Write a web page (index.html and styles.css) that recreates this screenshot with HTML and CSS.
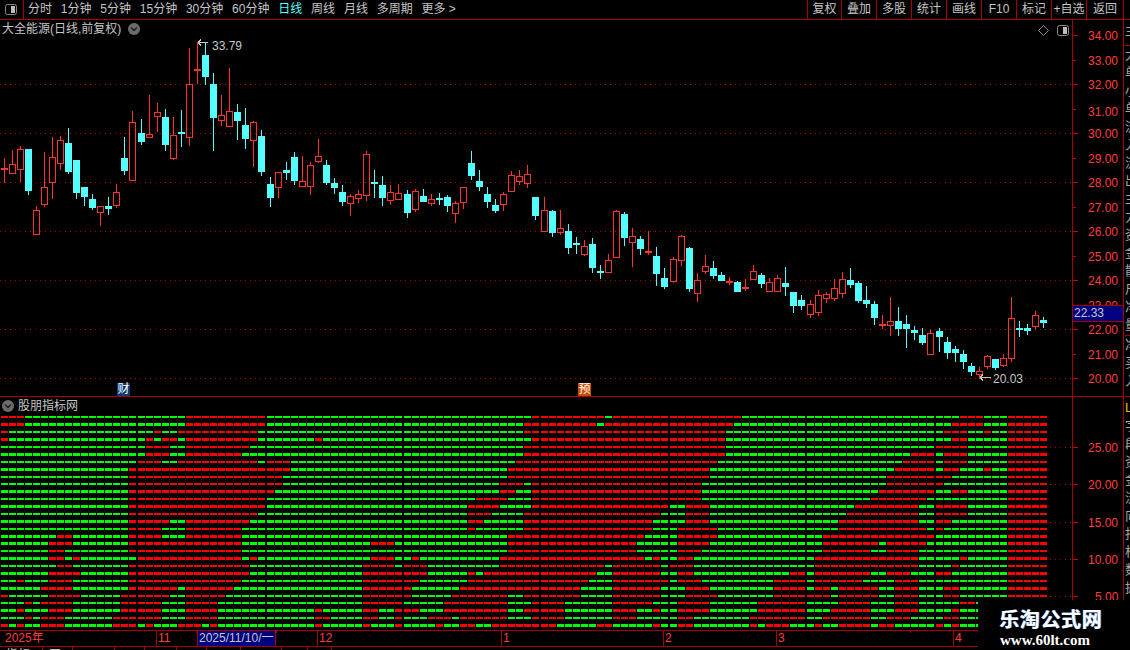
FILE: index.html
```html
<!DOCTYPE html>
<html lang="zh-CN">
<head>
<meta charset="utf-8">
<title>大全能源</title>
<link rel="stylesheet" href="styles.css">
</head>
<body>
<div class="app">
  <header class="toolbar">
    <div class="tool-left">
      <div class="tool-icon">
        <svg class="panel-icon" viewBox="0 0 12 11"><rect x="0.5" y="0.5" width="11" height="10" rx="2" class="panel-outline"/><rect x="6" y="2" width="4" height="7" class="panel-fill"/></svg>
      </div>
      <nav class="periods">
        <span>分时</span><span>1分钟</span><span>5分钟</span><span>15分钟</span><span>30分钟</span><span>60分钟</span><span class="active">日线</span><span>周线</span><span>月线</span><span>多周期</span><span>更多 &gt;</span>
      </nav>
    </div>
    <div class="actions">
      <span>复权</span><span>叠加</span><span>多股</span><span>统计</span><span>画线</span><span>F10</span><span>标记</span><span>+自选</span><span>返回</span>
    </div>
  </header>

  <main class="workspace">
    <section class="charts">
      <div class="pane pane-price">
        <svg id="price-chart" class="chart-svg" viewBox="0 20 1072 376"></svg>
        <div class="pane-title title-price">
          <span>大全能源(日线,前复权)</span>
          <svg class="chev" viewBox="0 0 12 12"><circle cx="6" cy="6" r="6" class="chev-disc"/><path d="M3 4.5 6 7.5 9 4.5" class="chev-mark"/></svg>
        </div>
        <div class="corner-tools">
          <svg class="diamond" viewBox="0 0 11 11"><path d="M5.5 0.5 10.5 5.5 5.5 10.5 0.5 5.5Z" class="panel-outline"/></svg>
          <svg class="panel-icon" viewBox="0 0 12 11"><rect x="0.5" y="0.5" width="11" height="10" rx="2" class="panel-outline"/><rect x="6" y="2" width="4" height="7" class="panel-fill"/></svg>
        </div>
        <span class="event event-cai">财</span>
        <span class="event event-yu">预</span>
      </div>
      <div class="pane pane-heat">
        <svg id="heat-chart" class="chart-svg" viewBox="0 397 1072 233"></svg>
        <div class="pane-title title-heat">
          <svg class="chev" viewBox="0 0 12 12"><circle cx="6" cy="6" r="6" class="chev-disc"/><path d="M3 4.5 6 7.5 9 4.5" class="chev-mark"/></svg>
          <span>股朋指标网</span>
        </div>
      </div>
    </section>

    <aside class="axis">
      <div class="axis-price">
        <svg class="axis-svg" viewBox="1073 20 50 376">
          <g class="ticks">
            <path d="M1073 35.500h5M1073 60.500h3M1073 84.500h5M1073 109.500h3M1073 133.500h5M1073 158.500h3M1073 182.500h5M1073 207.500h3M1073 231.500h5M1073 256.500h3M1073 280.500h5M1073 305.500h3M1073 329.500h5M1073 354.500h3M1073 378.500h5"/>
          </g>
          <g class="axis-labels">
            <text x="1088" y="40">34.00</text>
            <text x="1088" y="65">33.00</text>
            <text x="1088" y="89">32.00</text>
            <text x="1088" y="116">31.00</text>
            <text x="1088" y="138">30.00</text>
            <text x="1088" y="163">29.00</text>
            <text x="1088" y="187">28.00</text>
            <text x="1088" y="212">27.00</text>
            <text x="1088" y="236">26.00</text>
            <text x="1088" y="261">25.00</text>
            <text x="1088" y="285">24.00</text>
            <text x="1088" y="310">23.00</text>
            <text x="1088" y="334">22.00</text>
            <text x="1088" y="359">21.00</text>
            <text x="1088" y="383">20.00</text>
          </g>
        </svg>
        <div class="price-tag">22.33</div>
      </div>
      <div class="axis-heat">
        <svg class="axis-svg" viewBox="1073 397 50 233">
          <g class="ticks">
            <path d="M1073 447.500h5M1073 484.500h5M1073 522.500h5M1073 559.500h5M1073 596.500h5"/>
          </g>
          <g class="axis-labels">
            <text x="1088" y="452">25.00</text>
            <text x="1088" y="489">20.00</text>
            <text x="1088" y="527">15.00</text>
            <text x="1088" y="564">10.00</text>
            <text x="1095" y="601">5.00</text>
          </g>
        </svg>
      </div>
    </aside>

    <aside class="side">
      <div class="side-block side-a">主</div>
      <div class="side-block side-b">大单小单流入流出主力资金散户净量</div>
      <div class="side-block side-c">净买入</div>
      <div class="side-block side-d"><span class="side-gold">L</span>字段资金流向指标数据买入卖出净额占比</div>
    </aside>
  </main>

  <footer class="timeline">
    <div class="month first">2025年</div>
    <div class="month">11</div>
    <div class="month">12</div>
    <div class="month">1</div>
    <div class="month">2</div>
    <div class="month">3</div>
    <div class="month">4</div>
    <div class="date-cursor">2025/11/10/一</div>
    <i class="tick"></i>
  </footer>

  <div class="tabs">
    <span>指标</span><span>工</span><span></span><span></span><span></span><span></span><span></span><span></span><span></span><span></span>
  </div>

  <div class="watermark">
    <div class="wm-cn">乐淘公式网</div>
    <div class="wm-en">www.60lt.com</div>
  </div>
</div>
<script src="chart.js"></script>
</body>
</html>
```

FILE: styles.css
```css
* { box-sizing: border-box; }

html, body {
  margin: 0;
  background: #000;
}

body {
  font-family: "Liberation Sans", "Noto Sans CJK SC", sans-serif;
  font-size: 12px;
  color: #c6c6c6;
}

.app {
  position: relative;
  width: 1130px;
  height: 650px;
  overflow: hidden;
  background: #000;
}

/* toolbar */
.toolbar {
  display: flex;
  justify-content: space-between;
  height: 20px;
  border-bottom: 1px solid #a80000;
  padding-right: 6px;
}

.tool-left {
  display: flex;
  height: 19px;
}

.tool-icon {
  display: flex;
  align-items: center;
  justify-content: center;
  width: 24px;
  border-right: 1px solid #a80000;
  padding-right: 1px;
}

.panel-icon {
  display: block;
  width: 12px;
  height: 11px;
}

.panel-outline {
  fill: none;
  stroke: #8c8c8c;
}

.panel-fill {
  fill: #bdbdbd;
}

.periods {
  display: flex;
  align-items: center;
  gap: 8.8px;
  padding-left: 4px;
  line-height: 19px;
  white-space: nowrap;
}

.periods .active {
  color: #54ffff;
}

.actions {
  display: grid;
  grid-template-columns: 34px repeat(7, 35px) 38px;
  height: 19px;
}

.actions span {
  border-left: 1px solid #a80000;
  line-height: 19px;
  text-align: center;
  white-space: nowrap;
}

.actions span:last-child {
  border-right: 1px solid #a80000;
}

/* main area */
.workspace {
  display: flex;
  height: 610px;
}

.charts {
  width: 1072px;
}

.pane {
  position: relative;
}

.pane-price {
  height: 377px;
  border-bottom: 1px solid #a80000;
}

.pane-heat {
  height: 233px;
}

.chart-svg {
  display: block;
  width: 1072px;
}

.pane-price .chart-svg { height: 376px; }
.pane-heat .chart-svg { height: 233px; }

.pane-title {
  position: absolute;
  display: flex;
  align-items: center;
  white-space: nowrap;
  line-height: 14px;
}

.title-price {
  top: 2px;
  left: 2px;
  gap: 7px;
}

.title-heat {
  top: 2px;
  left: 2px;
  gap: 4px;
}

.chev {
  display: block;
  width: 12px;
  height: 12px;
}

.chev-disc { fill: #6c6c6c; }

.chev-mark {
  fill: none;
  stroke: #1c1c1c;
  stroke-width: 1.4;
}

.corner-tools {
  position: absolute;
  top: 5px;
  right: 3px;
  display: flex;
  align-items: center;
  gap: 8px;
}

.diamond {
  display: block;
  width: 11px;
  height: 11px;
}

.event {
  position: absolute;
  top: 363px;
  width: 13px;
  height: 13px;
  font-size: 12px;
  line-height: 13px;
  text-align: center;
  color: #fff;
}

.event-cai {
  left: 117px;
  background: #0d3a78;
}

.event-yu {
  left: 578px;
  background: #c94c00;
}

/* axis */
.axis {
  width: 52px;
  border-left: 1px solid #a80000;
  border-right: 1px solid #a80000;
}

.axis-price {
  position: relative;
  height: 377px;
  border-bottom: 1px solid #a80000;
}

.axis-heat {
  height: 233px;
}

.axis-svg {
  display: block;
  width: 50px;
}

.axis-price .axis-svg { height: 376px; }
.axis-heat .axis-svg { height: 233px; }

.ticks path {
  fill: none;
  stroke: #c80000;
  stroke-width: 1;
}

.axis-labels text {
  font-family: "Liberation Sans", sans-serif;
  font-size: 12px;
  fill: #ff3c3c;
}

.price-tag {
  position: absolute;
  top: 285px;
  left: 0;
  width: 50px;
  height: 17px;
  padding-left: 1px;
  background: #000080;
  border-top: 1px solid #a80000;
  border-bottom: 1px solid #a80000;
  color: #c6c6c6;
  line-height: 15px;
}

/* cropped neighbouring column */
.side {
  width: 6px;
  overflow: hidden;
}

.side-block {
  width: 13px;
  margin-left: 1px;
  font-size: 13px;
  line-height: 18px;
  color: #a8a8a8;
  overflow: hidden;
}

.side-a {
  height: 26px;
  padding-top: 2px;
  border-bottom: 1px solid #a80000;
}

.side-b {
  height: 290px;
  border-bottom: 1px solid #a80000;
}

.side-c {
  height: 61px;
  border-bottom: 1px solid #a80000;
}

.side-d {
  height: 200px;
  padding-top: 2px;
}

.side-gold {
  display: block;
  color: #e0c000;
}

/* time axis */
.timeline {
  position: relative;
  display: grid;
  grid-template-columns: 156px 161px 184px 162px 113px 177px 1fr;
  height: 17px;
  border-top: 1px solid #a80000;
  border-bottom: 1px solid #a80000;
}

.month {
  border-left: 1px solid #a80000;
  padding-left: 1px;
  line-height: 15px;
  color: #ff3c3c;
}

.month.first {
  border-left: 0;
  padding-left: 5px;
}

.date-cursor {
  position: absolute;
  top: 0;
  left: 197px;
  width: 79px;
  height: 15px;
  padding-left: 1px;
  border-left: 1px solid #a80000;
  border-right: 1px solid #a80000;
  background: #000080;
  color: #c6c6c6;
  line-height: 15px;
  white-space: nowrap;
}

.date-cursor::before,
.date-cursor::after {
  content: "";
  position: absolute;
  top: 0;
  width: 1px;
  height: 2px;
  background: #a80000;
}

.date-cursor::before { left: -2px; }
.date-cursor::after { right: -2px; }

.tick {
  position: absolute;
  top: 0;
  left: 910px;
  width: 1px;
  height: 2px;
  background: #a80000;
}

/* lower tabs, cut by the window edge */
.tabs {
  display: grid;
  grid-template-columns: 43px 30px 42px 30px 32px 30px 34px 41px 26px 24px;
  height: 16px;
}

.tabs span {
  border-right: 1px solid #a80000;
  padding: 1px 0 0 6px;
  line-height: 14px;
  color: #c6c6c6;
}

/* watermark */
.watermark {
  position: absolute;
  top: 600px;
  left: 978px;
  width: 152px;
  height: 50px;
  padding: 7px 0 0 21px;
  background: #000;
  color: #fff;
}

.wm-cn {
  font-family: "Noto Sans CJK SC", sans-serif;
  font-size: 20px;
  font-weight: 700;
  line-height: 24px;
  letter-spacing: 0.6px;
  white-space: nowrap;
  text-shadow: 1px 0 0 #6fa8ff;
}

.wm-en {
  margin-top: 1px;
  padding-left: 1px;
  font-family: "Liberation Serif", serif;
  font-size: 15px;
  font-weight: 700;
  line-height: 16px;
  white-space: nowrap;
}

/* svg chart parts */
.grid-dots {
  stroke: #b00000;
  stroke-width: 1;
  stroke-dasharray: 1 4;
  fill: none;
}

.up { stroke: #ff3232; fill: none; }
.up-solid { fill: #ff3232; }
.down { stroke: #54ffff; fill: none; }
.down-solid { fill: #54ffff; }

.cell-red { fill: #ff0000; }
.cell-green { fill: #00ff00; }

.note-line {
  stroke: #c6c6c6;
  fill: none;
}

.note-text {
  font-family: "Liberation Sans", sans-serif;
  font-size: 12px;
  fill: #c6c6c6;
}
```

FILE: chart.js
```js
// [high, bodyTop, bodyBottom, low, isUp] in page pixels, one candle per trading day
var CANDLES = [
[158,168,170,182,1],[150,164,173,173,1],[146,149,169,181,1],[149,149,191,194,0],[206,210,234,234,1],
[152,187,204,206,1],[137,157,182,198,1],[136,140,163,169,1],[128,143,172,173,0],[160,160,193,198,0],
[187,187,197,205,0],[194,199,208,209,0],[206,206,212,225,1],[197,206,209,214,0],[184,192,205,207,1],
[137,158,171,174,0],[111,122,180,180,1],[119,133,142,144,0],[95,134,137,137,1],[103,112,116,131,1],
[109,117,145,150,0],[117,135,158,159,1],[110,132,134,146,0],[48,84,137,145,1],[42,69,70,83,1],
[43,55,77,84,0],[73,84,118,150,0],[95,115,120,125,1],[68,111,126,126,1],[104,112,121,139,0],
[108,125,139,148,0],[121,122,140,166,1],[130,136,172,175,0],[177,184,198,206,0],[172,172,187,197,1],
[162,170,173,179,0],[152,157,181,184,0],[156,181,186,186,1],[162,165,186,194,1],[139,156,161,162,1],
[160,165,183,184,0],[178,183,188,193,0],[185,192,202,205,0],[194,196,203,215,1],[190,194,198,202,1],
[151,154,195,200,1],[170,182,183,197,0],[176,185,198,205,0],[185,192,200,204,1],[184,193,199,199,1],
[190,194,213,217,0],[189,191,209,211,1],[189,196,202,202,0],[194,199,203,205,1],[193,198,199,204,0],
[195,197,206,211,0],[201,203,213,222,1],[187,187,202,208,1],[151,163,176,179,0],[170,181,187,190,0],
[187,194,202,207,0],[199,205,211,212,0],[192,194,204,210,1],[171,175,191,191,1],[170,176,181,184,1],
[165,174,183,187,1],[197,197,216,219,0],[197,210,231,231,1],[210,211,233,236,0],[210,228,232,234,1],
[224,231,248,253,0],[237,243,244,253,0],[240,246,254,255,1],[238,244,268,272,0],[265,271,272,278,0],
[254,260,272,272,1],[210,211,257,257,1],[212,214,238,245,0],[228,236,242,266,1],[236,239,249,254,0],
[231,251,253,254,1],[247,256,274,285,0],[268,278,287,288,0],[257,259,281,282,1],[235,236,260,265,1],
[247,248,289,291,0],[273,280,293,301,1],[255,266,271,273,1],[261,268,276,278,0],[272,275,281,281,0],
[277,281,282,284,1],[281,282,292,292,0],[279,287,289,290,1],[265,271,279,279,1],[273,275,284,287,0],
[278,282,291,291,1],[275,278,291,291,1],[267,283,287,295,0],[292,292,306,312,0],[295,300,306,309,0],
[300,304,314,317,1],[290,295,312,315,1],[292,294,298,302,1],[279,288,298,300,1],[272,279,293,297,1],
[268,280,285,287,0],[281,283,301,302,0],[286,300,304,307,0],[301,304,318,324,0],[315,324,325,328,1],
[297,321,325,335,1],[307,321,329,335,0],[315,324,329,347,0],[326,330,333,339,0],[328,335,343,344,0],
[330,333,354,354,1],[328,331,337,351,0],[337,342,353,358,0],[346,349,353,361,0],[350,354,362,368,0],
[363,366,372,375,0],[367,371,374,378,1],[355,356,366,368,1],[359,359,368,369,0],[354,358,365,366,1],
[297,318,358,361,1],[321,328,329,336,0],[324,328,331,334,0],[311,315,326,329,1],[317,320,323,327,0]
];

// columns after which the 8px pitch gains one extra pixel
var JOGS = [17, 33, 50, 67, 83, 100, 116];

// top pixel and height of each signal row
var ROW_TOPS = [416,423,431,438,446,453,461,468,476,483,490,498,505,513,520,528,535,542,550,557,565,572,580,587,595,602,609,617,624];
var THICK = {1:1,3:1,5:1,7:1,10:1,12:1,14:1,16:1,17:1,19:1,21:1,23:1,26:1,28:1};

// red runs per row, measured on a ruler 1.493x the page width; everything else is green
var RED = [
[0,36,278,397,795,903,915,998,1001,1107,1434,1470,1505,1568],
[0,36,278,397,783,890,903,998,1001,1095,1422,1470,1505,1568],
[0,12,230,240,266,385,783,998,1001,1083,1410,1445,1470,1480,1505,1568],
[0,12,218,228,242,265,278,385,470,482,795,998,1001,1083,1422,1445,1505,1568],
[218,252,278,373,783,998,1001,1083,1398,1445,1505,1568],
[218,252,278,361,783,998,1001,1083,1360,1398,1410,1445,1505,1568],
[206,240,265,385,400,432,771,998,1001,1071,1348,1395,1410,1445,1505,1568],
[194,397,400,432,759,998,1001,1059,1337,1395,1410,1432,1470,1480,1505,1568],
[194,397,400,420,759,998,1001,1059,1325,1420,1505,1568],
[194,397,400,420,747,782,795,998,1001,1047,1325,1408,1505,1568],
[194,397,400,410,747,771,795,998,1001,1047,1313,1395,1422,1445,1505,1568],
[194,397,711,758,795,998,1001,1047,1302,1383,1505,1568],
[194,397,699,746,795,998,1024,1059,1278,1372,1398,1445,1505,1568],
[194,385,699,733,783,986,1024,1059,1266,1372,1398,1445,1505,1568],
[194,252,278,373,699,721,783,974,1024,1059,1254,1372,1398,1420,1505,1568],
[194,240,278,360,699,709,783,974,1012,1071,1254,1383,1398,1408,1505,1568],
[85,108,194,240,278,360,759,962,1012,1071,1230,1395,1505,1568],
[73,108,194,360,554,590,759,950,1012,1059,1230,1312,1325,1383,1505,1568],
[73,96,194,360,759,950,1012,1047,1230,1300,1325,1372,1505,1568],
[73,96,108,120,206,360,373,385,554,590,614,626,747,962,975,986,1012,1035,1218,1372,1434,1445,1505,1568],
[85,108,194,373,542,590,602,638,747,903,915,986,1001,1035,1218,1372,1422,1432,1505,1568],
[73,120,194,373,542,638,699,709,723,890,915,986,1012,1035,1180,1205,1218,1300,1325,1360,1398,1420,1505,1568],
[25,36,73,108,194,360,542,626,699,878,915,998,1012,1047,1156,1205,1218,1290,1337,1372,1505,1568],
[61,108,193,264,278,348,542,614,687,866,915,986,1024,1059,1156,1205,1218,1240,1254,1312,1337,1372,1410,1432,1505,1568],
[0,12,73,120,181,252,278,336,542,614,675,759,783,866,915,986,1024,1071,1156,1240,1254,1312,1337,1372,1410,1432,1505,1568],
[37,48,61,108,181,240,278,324,542,602,663,759,795,842,915,974,1012,1059,1132,1205,1254,1300,1337,1372,1434,1458],
[25,36,73,108,181,240,278,324,470,482,542,565,590,626,663,759,783,842,915,950,975,986,1012,1059,1132,1205,1242,1300,1337,1372,1422,1432],
[37,48,61,96,169,240,278,324,470,493,542,565,590,602,639,670,687,759,795,842,915,950,1012,1035,1120,1205,1230,1300,1325,1360,1410,1432],
[0,12,25,36,61,96,169,203,218,228,266,300,314,324,470,482,542,553,590,602,651,665,687,708,735,830,892,915,975,986,1012,1035,1120,1130,1145,1180,1218,1230,1254,1300,1313,1340,1398,1408,1422,1432]
];

var SVG_NS = "http://www.w3.org/2000/svg";

function el(parent, name, attrs) {
  var node = document.createElementNS(SVG_NS, name);
  for (var key in attrs) node.setAttribute(key, attrs[key]);
  node.setAttribute("shape-rendering", name === "text" ? "auto" : "crispEdges");
  parent.appendChild(node);
  return node;
}

function colLeft(i) {
  var off = 0;
  for (var j = 0; j < JOGS.length; j++) if (i >= JOGS[j]) off++;
  return 1 + 8 * i + off;
}

function drawPrice(svg) {
  for (var y = 84; y <= 378; y += 49) {
    el(svg, "line", { x1: 0, x2: 1072, y1: y + 0.5, y2: y + 0.5, "class": "grid-dots" });
  }
  CANDLES.forEach(function (c, i) {
    var left = colLeft(i), mid = left + 3.5;
    var high = c[0], top = c[1], bot = c[2], low = c[3], up = c[4];
    var solid = bot - top <= 2;
    var line = up ? "up" : "down";
    if (high < top) el(svg, "line", { x1: mid, x2: mid, y1: high, y2: top, "class": line });
    if (low > bot) el(svg, "line", { x1: mid, x2: mid, y1: bot, y2: low + 1, "class": line });
    if (up && !solid) {
      el(svg, "rect", { x: left + 0.5, y: top + 0.5, width: 6, height: bot - top, "class": "up" });
    } else {
      el(svg, "rect", { x: left, y: top, width: 7, height: Math.max(bot - top, solid ? 2 : 1), "class": up ? "up-solid" : "down-solid" });
    }
  });
  // high and low notes
  el(svg, "path", { d: "M198 42.500h10M198 42.500l3-3M198 42.500l3 3", "class": "note-line" });
  var hi = el(svg, "text", { x: 212, y: 50, "class": "note-text" });
  hi.textContent = "33.79";
  el(svg, "path", { d: "M980 377.500h11M980 377.500l3-3M980 377.500l3 3", "class": "note-line" });
  var lo = el(svg, "text", { x: 993, y: 383, "class": "note-text" });
  lo.textContent = "20.03";
}

function isRed(runs, x) {
  var pos = x * 1.493;
  for (var k = 0; k < runs.length; k += 2) {
    if (pos >= runs[k] && pos <= runs[k + 1]) return true;
  }
  return false;
}

function drawHeat(svg) {
  [447, 484, 522, 559, 596].forEach(function (y) {
    el(svg, "line", { x1: 1040, x2: 1072, y1: y + 0.5, y2: y + 0.5, "class": "grid-dots" });
  });
  RED.forEach(function (runs, r) {
    for (var i = 0; i < CANDLES.length; i++) {
      var left = colLeft(i);
      el(svg, "rect", {
        x: left, y: ROW_TOPS[r], width: 7, height: THICK[r] ? 3 : 2,
        "class": isRed(runs, left + 3.5) ? "cell-red" : "cell-green"
      });
    }
  });
}

drawPrice(document.getElementById("price-chart"));
drawHeat(document.getElementById("heat-chart"));
```
